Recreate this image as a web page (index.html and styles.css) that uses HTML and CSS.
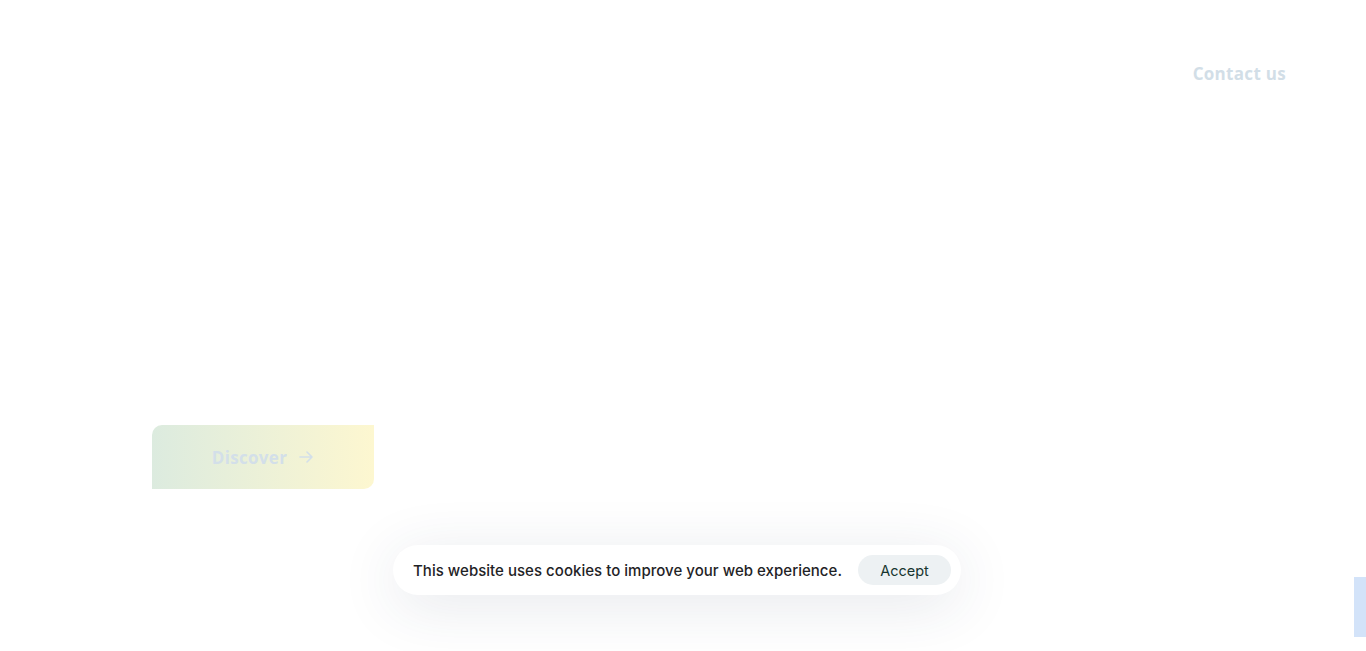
FILE: index.html
```html
<!DOCTYPE html>
<html lang="en">
<head>
  <meta charset="UTF-8" />
  <meta name="viewport" content="width=device-width, initial-scale=1.0" />
  <title>Home</title>
  <link rel="stylesheet" href="styles.css">
</head>
<body>
  <header class="top">
    <a class="contact" href="#">Contact us</a>
  </header>

  <main class="hero">
    <a class="discover" href="#">
      Discover
      <svg width="16" height="16" viewBox="0 0 16 16" fill="none" stroke="currentColor" stroke-width="1.6" stroke-linecap="round" stroke-linejoin="round">
        <path d="M2 8h12M9 3l5 5-5 5"/>
      </svg>
    </a>
  </main>

  <div class="cookie">
    <p>This website uses cookies to improve your web experience.</p>
    <button class="accept">Accept</button>
  </div>

  <div class="side-tab"></div>
</body>
</html>
```

FILE: styles.css
```css
body {
  margin: 0;
  background: #fff;
  font-family: "Open Sans", sans-serif;
  height: 651px;
  overflow: hidden;
}
.top {
  display: flex;
  justify-content: flex-end;
  padding: 61px 80px 0 0;
}
.contact {
  color: #d2dee7;
  font-weight: 700;
  font-size: 17px;
  letter-spacing: 0.3px;
  text-decoration: none;
  line-height: 26px;
}
.hero {
  padding: 338px 0 0 152px;
}
.discover {
  display: flex;
  align-items: center;
  justify-content: center;
  gap: 11px;
  width: 222px;
  height: 64px;
  box-sizing: border-box;
  background: linear-gradient(90deg, #dcebdf 0%, #fdf7d0 100%);
  border-radius: 10px 0 10px 0;
  color: #d3dfe9;
  font-weight: 700;
  font-size: 17px;
  letter-spacing: 0.3px;
  text-decoration: none;
}
.cookie {
  position: absolute;
  left: 393px;
  top: 545px;
  width: 568px;
  height: 50px;
  box-sizing: border-box;
  display: flex;
  align-items: center;
  justify-content: space-between;
  padding: 0 10px 0 20px;
  background: #fff;
  border-radius: 25px;
  box-shadow: 0 10px 60px rgba(40, 60, 90, 0.12);
  font-family: "Inter", sans-serif;
}
.cookie p {
  margin: 0;
  font-size: 15px;
  font-weight: 500;
  letter-spacing: 0.03px;
  color: #1f2326;
}
.accept {
  border: none;
  background: #edf1f3;
  color: #17352f;
  font-family: "Inter", sans-serif;
  font-size: 14.5px;
  width: 93px;
  height: 30px;
  border-radius: 15px;
  cursor: pointer;
}
.side-tab {
  position: absolute;
  right: 0;
  top: 577px;
  width: 12px;
  height: 60px;
  background: #d3e3f9;
}
```
